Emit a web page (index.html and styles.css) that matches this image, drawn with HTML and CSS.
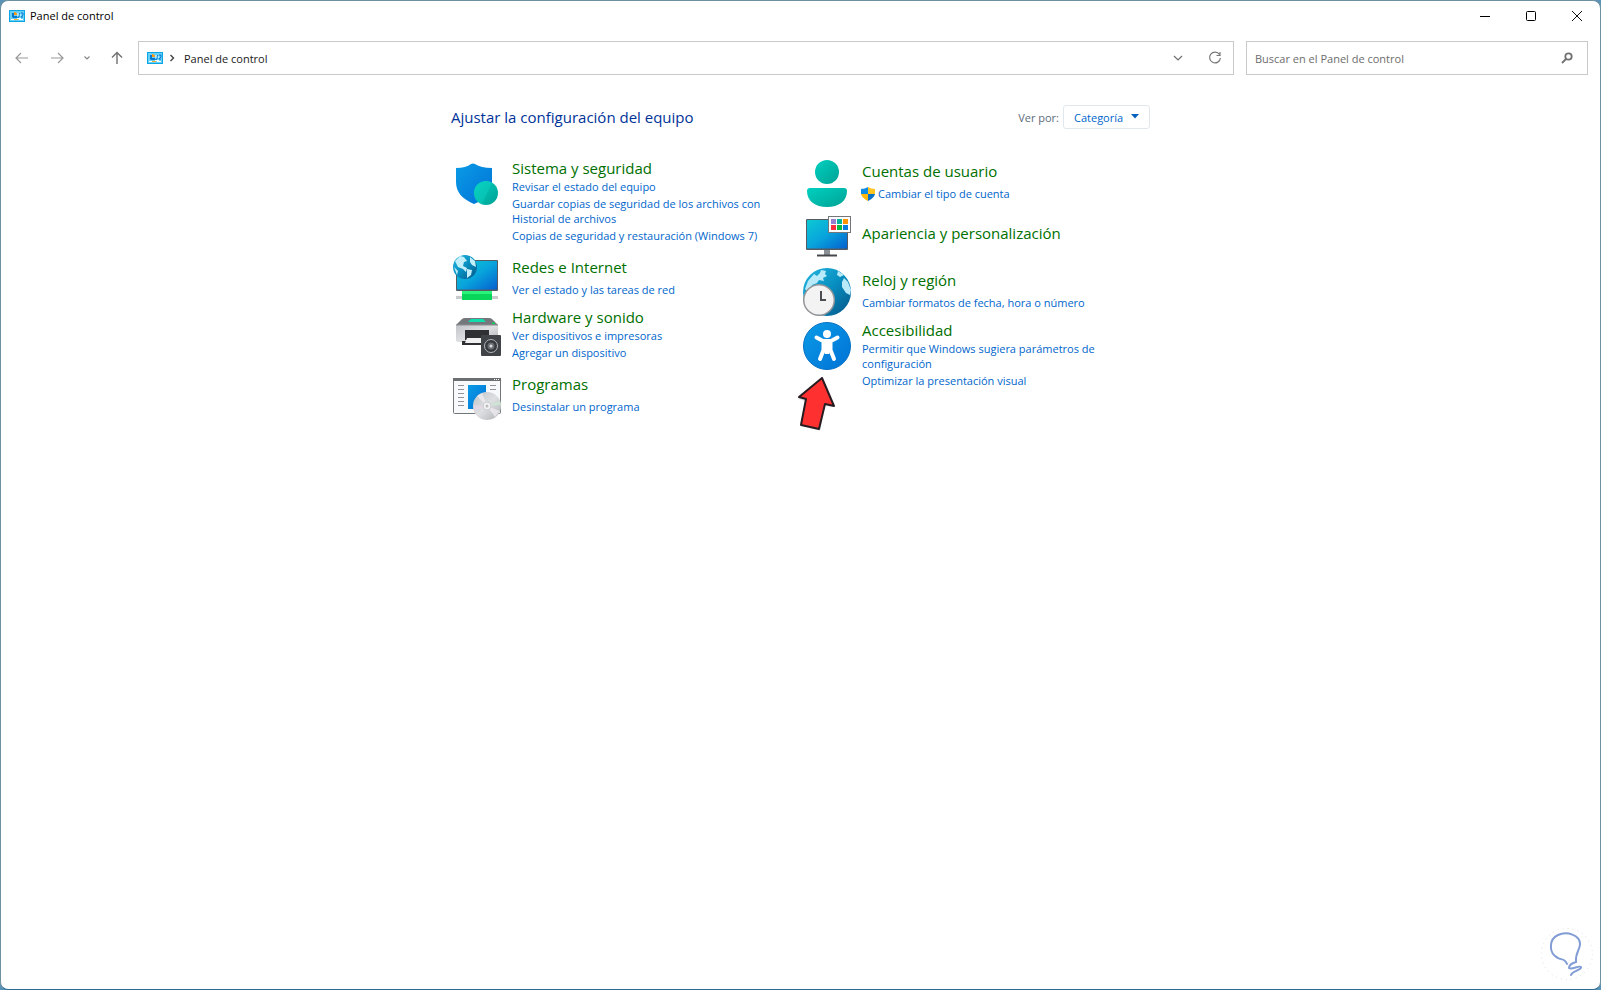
FILE: index.html
```html
<!DOCTYPE html>
<html lang="es">
<head>
<meta charset="utf-8">
<title>Panel de control</title>
<link rel="stylesheet" href="styles.css">
</head>
<body>
<svg class="defs" aria-hidden="true">
  <defs>
    <linearGradient id="blue" x1="0" y1="0" x2="1" y2="1"><stop offset="0" stop-color="#0a9be6"/><stop offset="1" stop-color="#0072d6"/></linearGradient>
    <linearGradient id="screen" x1="0" y1="0" x2="1" y2="1"><stop offset="0" stop-color="#0cc8d2"/><stop offset=".5" stop-color="#08a4dc"/><stop offset="1" stop-color="#0560cf"/></linearGradient>
    <linearGradient id="teal" x1="0" y1="0" x2="1" y2="1"><stop offset="0" stop-color="#00d0c0"/><stop offset="1" stop-color="#00a294"/></linearGradient>
    <linearGradient id="sea" x1="0" y1="0" x2="1" y2="1"><stop offset="0" stop-color="#25b8e0"/><stop offset=".5" stop-color="#078ec0"/><stop offset="1" stop-color="#075385"/></linearGradient>
    <linearGradient id="silver" x1="0" y1="0" x2="1" y2="1"><stop offset="0" stop-color="#c2c5c9"/><stop offset=".5" stop-color="#dddfe1"/><stop offset="1" stop-color="#aeb1b5"/></linearGradient>
    <symbol id="panel" viewBox="0 0 16 12">
      <rect width="16" height="12" fill="#0aa5e4"/><rect x="1" y="1" width="14" height="10" fill="#67d0f7"/>
      <path d="M3 3h2v3h3v2H4L3 7z" fill="#0878cf"/><path d="M5 2v3h3a3 3 0 0 0-3-3z" fill="#ff980e"/>
      <path d="M8 8l2-1V4l1-1M12 3h2v2l-2 2h2" fill="none" stroke="#0878cf"/><path d="M9 3v3M11 5h1M8 8.500h4" fill="none" stroke="#fff"/>
      <path d="M2 9.500h4M10 9.500h4" stroke="#fff"/><path d="M5 9.500h4" stroke="#ffad2c"/>
    </symbol>
  </defs>
</svg>
<div class="window">
  <header class="titlebar">
    <svg class="app-icon" aria-hidden="true"><use href="#panel"/></svg>
    <h1 class="window-title">Panel de control</h1>
    <div class="window-controls">
      <button type="button" aria-label="Minimizar"><svg width="12" height="12" viewBox="0 0 12 12"><path d="M1 6.500h10" stroke="#000"/></svg></button>
      <button type="button" aria-label="Maximizar"><svg width="12" height="12" viewBox="0 0 12 12"><rect x="1.500" y="1.500" width="9" height="9" rx="1" fill="none" stroke="#000"/></svg></button>
      <button type="button" aria-label="Cerrar"><svg width="12" height="12" viewBox="0 0 12 12"><path d="M1 1l10 10M11 1L1 11" stroke="#111"/></svg></button>
    </div>
  </header>

  <nav class="toolbar" aria-label="Navegación">
    <div class="history">
      <button type="button" class="nav-wide" aria-label="Atrás"><svg width="14" height="12" viewBox="0 0 14 12"><path d="M13 6H1.500M6 1L1 6l5 5" fill="none" stroke="#999" stroke-width="1.200"/></svg></button>
      <button type="button" class="nav-wide" aria-label="Adelante"><svg width="14" height="12" viewBox="0 0 14 12"><path d="M1 6h11.500M8 1l5 5-5 5" fill="none" stroke="#999" stroke-width="1.200"/></svg></button>
      <button type="button" class="nav-narrow" aria-label="Ubicaciones recientes"><svg width="8" height="8" viewBox="0 0 8 8"><path d="M1.500 2.500L4 5l2.500-2.500" fill="none" stroke="#888" stroke-width="1.200"/></svg></button>
      <button type="button" class="nav-wide" aria-label="Arriba"><svg width="12" height="14" viewBox="0 0 12 14"><path d="M6 13V2M1 6.500l5-5 5 5" fill="none" stroke="#707070" stroke-width="1.400"/></svg></button>
    </div>
    <div class="address">
      <svg class="app-icon" aria-hidden="true"><use href="#panel"/></svg>
      <svg class="crumb-arrow" width="6" height="8" viewBox="0 0 6 8" aria-hidden="true"><path d="M1.500 1l3 3-3 3" fill="none" stroke="#444" stroke-width="1.400"/></svg>
      <a class="crumb" href="#">Panel de control</a>
      <button type="button" class="address-button" aria-label="Ubicaciones anteriores"><svg width="10" height="8" viewBox="0 0 10 8"><path d="M1 2l4 4 4-4" fill="none" stroke="#707070" stroke-width="1.200"/></svg></button>
      <button type="button" class="address-button" aria-label="Actualizar"><svg width="14" height="14" viewBox="0 0 14 14"><path d="M11.500 3.500A5.400 5.400 0 1 0 12.400 7M12 1v3.500H8.500" fill="none" stroke="#777" stroke-width="1.200"/></svg></button>
    </div>
    <form class="search" role="search">
      <input type="search" aria-label="Buscar" placeholder="Buscar en el Panel de control">
      <button type="button" aria-label="Buscar"><svg width="12" height="12" viewBox="0 0 12 12"><circle cx="7.500" cy="4.500" r="3.200" fill="none" stroke="#707070" stroke-width="1.800"/><path d="M5 7L1 11" stroke="#707070" stroke-width="1.800"/></svg></button>
    </form>
  </nav>

  <main class="content">
    <div class="heading">
      <h2>Ajustar la configuración del equipo</h2>
      <div class="view-by">
        <label for="view">Ver por:</label>
        <div class="select">
          <select id="view"><option>Categoría</option></select>
          <svg width="8" height="5" viewBox="0 0 8 5" aria-hidden="true"><path d="M0 0h8L4 4.500z" fill="#0560c0"/></svg>
        </div>
      </div>
    </div>

    <div class="columns">
      <div class="column">
        <section class="category multi">
          <svg class="icon" viewBox="0 0 48 48" aria-hidden="true"><path d="M3 8q10 0 15-4 2-1 4 0 6 4 17 4v14c0 10-7 18-18 22C9 39 3 32 3 22z" fill="url(#blue)"/><circle cx="33" cy="33" r="12" fill="url(#teal)"/><path d="M21 33a12 12 0 0 1 18-10.400L29 44.300A12 12 0 0 1 21 33z" fill="#14dbcb" opacity=".35"/></svg>
          <div class="details">
            <h3><a href="#">Sistema y seguridad</a></h3>
            <ul><li><a href="#">Revisar el estado del equipo</a></li><li><a href="#">Guardar copias de seguridad de los archivos con Historial de archivos</a></li><li><a href="#">Copias de seguridad y restauración (Windows 7)</a></li></ul>
          </div>
        </section>
        <section class="category single">
          <svg class="icon" viewBox="0 0 48 48" aria-hidden="true"><rect x="3" y="5" width="42" height="31" rx="1" fill="#555b61"/><rect x="4" y="6" width="40" height="28.500" fill="url(#screen)"/><path d="M3 42.500h42" stroke="#c8cbce" stroke-width="3"/><rect x="9" y="36" width="30" height="9" fill="#08d65a"/><path d="M9 37.500h30" stroke="#2af37b" stroke-width="3"/><circle cx="12" cy="12" r="12" fill="url(#sea)"/><path d="M2 6l5-5 4 1 3 4-3 1-1 4 4 2-1 4-3-3-5-2-2-4zM17 2l5 4 1 6-4-2-2-3zM14 14l5 1-1 5-4 3zM1 12l4 4-1 4z" fill="#c2effa"/></svg>
          <div class="details">
            <h3><a href="#">Redes e Internet</a></h3>
            <ul><li><a href="#">Ver el estado y las tareas de red</a></li></ul>
          </div>
        </section>
        <section class="category multi">
          <svg class="icon" viewBox="0 0 48 48" aria-hidden="true"><path d="M3 16l6-6q1-1 3-1h24q2 0 3 1l6 6v2H3z" fill="#74787c"/><path d="M15 13l3-3h12l3 3z" fill="#10dcae"/><path d="M3 16h42v15q0 2-3 2H6q-3 0-3-2z" fill="url(#silver)"/><path d="M3 16h42" stroke="#8d9093"/><rect x="39" y="13.500" width="3" height="1.500" fill="#08d65a"/><path d="M12 21h24v10H12z" fill="#2f3032"/><path d="M9 32h30v4H9z" fill="#2e3034"/><path d="M14 29h20l2 5H12z" fill="#f0f0f1"/><rect x="28" y="26" width="20" height="21" rx="1" fill="#404448"/><circle cx="38" cy="37" r="6.500" fill="#36393d" stroke="#b4b8bc"/><circle cx="38" cy="37" r="3.500" fill="#6a6e72"/><circle cx="38" cy="37" r="1.500" fill="#ddd"/></svg>
          <div class="details">
            <h3><a href="#">Hardware y sonido</a></h3>
            <ul><li><a href="#">Ver dispositivos e impresoras</a></li><li><a href="#">Agregar un dispositivo</a></li></ul>
          </div>
        </section>
        <section class="category single">
          <svg class="icon" viewBox="0 0 48 48" aria-hidden="true"><rect x=".5" y="6.500" width="47" height="35" rx="1" fill="#f8f9fa" stroke="#74777a"/><path d="M0 7.500h48" stroke="#6c6f72" stroke-width="3"/><path d="M41 7.500h1m1 0h1m1 0h1" stroke="#fff"/><path d="M5 13.500h6m-6 4h6m-6 4h6m-6 4h6m-6 4h6m-6 4h6M37 13.500h6m-6 4h6" stroke="#909397"/><rect x="15" y="13" width="18" height="24" fill="url(#blue)"/><circle cx="34" cy="34" r="14" fill="url(#silver)"/><path d="M34 34L24 24l5-3zM34 34l13 5-5 6z" fill="#f3eff5" opacity=".7"/><path d="M34 34l-13 5-1-6z" fill="#efd7ee" opacity=".5"/><path d="M34 34l13-5 1 4z" fill="#ccefd4" opacity=".6"/><circle cx="34" cy="34" r="4" fill="#f2f2f3" stroke="#cacccf"/><circle cx="34" cy="34" r="1.500" fill="#bbb"/></svg>
          <div class="details">
            <h3><a href="#">Programas</a></h3>
            <ul><li><a href="#">Desinstalar un programa</a></li></ul>
          </div>
        </section>
      </div>

      <div class="column">
        <section class="category single">
          <svg class="icon" viewBox="0 0 48 48" aria-hidden="true"><circle cx="24" cy="13" r="12" fill="url(#teal)"/><path d="M7 29h34q3 0 3 3c0 10-8 16-20 16S4 42 4 32q0-3 3-3z" fill="url(#teal)"/></svg>
          <div class="details">
            <h3><a href="#">Cuentas de usuario</a></h3>
            <ul><li class="with-shield"><svg class="shield" width="14" height="14" viewBox="0 0 14 14" aria-hidden="true"><path d="M0 2q4 0 7-2v7H0z" fill="#0c8ce4"/><path d="M7 0q3 2 7 2v5H7z" fill="#ffc420"/><path d="M0 7h7v7Q1 11 0 7z" fill="#ffb80e"/><path d="M7 7h7q-1 4-7 7z" fill="#0770c8"/></svg><a href="#">Cambiar el tipo de cuenta</a></li></ul>
          </div>
        </section>
        <section class="category title-only">
          <svg class="icon" viewBox="0 0 48 48" aria-hidden="true"><rect x="3" y="8" width="42" height="31" rx="1" fill="#555b61"/><rect x="4" y="9" width="40" height="28.500" fill="url(#screen)"/><path d="M21 39h6v5h-6z" fill="#8b9095"/><path d="M14 44.500h20" stroke="#44484c" stroke-width="2"/><rect x="25.500" y="5.500" width="22" height="16" fill="#fff" stroke="#74777a"/><path d="M28 8h5v5h-5z" fill="#9880d0"/><path d="M34 8h5v5h-5z" fill="#00b4a0"/><path d="M40 8h5v5h-5z" fill="#ff9400"/><path d="M28 14h5v5h-5z" fill="#ff303b"/><path d="M34 14h5v5h-5z" fill="#08b944"/><path d="M40 14h5v5h-5z" fill="#087fe0"/></svg>
          <div class="details"><h3><a href="#">Apariencia y personalización</a></h3></div>
        </section>
        <section class="category single">
          <svg class="icon" viewBox="0 0 48 48" aria-hidden="true"><circle cx="24" cy="24" r="24" fill="url(#sea)"/><path d="M5 13l6-7 3 2 3-3 1-3 5 1-1 3 2 2-4 2 1 3-5-1-2 3-5 2-1 4-4 2-2-2z" fill="#b9eafa"/><path d="M41 10l4 4 3 8-1 5-4-2-4-6v-5zM35 3l6 4-4 2-3-2z" fill="#b9eafa"/><circle cx="16" cy="32" r="15.300" fill="#f3f3f4" stroke="#929598" stroke-width="1.500"/><path d="M18 23v9h5" fill="none" stroke="#4a4e52" stroke-width="2"/></svg>
          <div class="details">
            <h3><a href="#">Reloj y región</a></h3>
            <ul><li><a href="#">Cambiar formatos de fecha, hora o número</a></li></ul>
          </div>
        </section>
        <section class="category multi">
          <svg class="icon" viewBox="0 0 48 48" aria-hidden="true"><circle cx="24" cy="24" r="23.500" fill="url(#blue)" stroke="#0872c4"/><circle cx="24" cy="12" r="4" fill="#fff"/><path d="M13.500 15.500L20 19h8l6.500-3.500M20.500 20v8L17 37M27.500 20v8L31 37" fill="none" stroke="#fff" stroke-width="4" stroke-linecap="round" stroke-linejoin="round"/><path d="M20 18h8v10l-2 4h-4l-2-4z" fill="#fff"/></svg>
          <div class="details">
            <h3><a href="#">Accesibilidad</a></h3>
            <ul><li><a href="#">Permitir que Windows sugiera parámetros de configuración</a></li><li><a href="#">Optimizar la presentación visual</a></li></ul>
          </div>
          <svg class="pointer" width="40" height="56" viewBox="0 0 40 56" aria-hidden="true"><path d="M24 3L1 23l7 2L3 49l20 6 5-25 9 1z" fill="#bbb" opacity=".45"/><path d="M25 2L2 21l7 2-5 26 18 4 6-25 9 2z" fill="#ff3030" stroke="#281c20" stroke-width="2" stroke-linejoin="round"/></svg>
        </section>
      </div>
    </div>
  </main>

  <svg class="watermark" width="52" height="52" viewBox="0 0 52 52" aria-hidden="true"><circle cx="26" cy="26" r="25.500" fill="none" stroke="#dde0e6" stroke-dasharray="1 4"/><path d="M26 36c-2-6-6-4-9-6C7 25 8 11 17 7s22 0 22 9c0 6-5 9-4 18q-7 2-7 6c3 2 10-3 12-1 1 3-9 4-10 8" fill="none" stroke="#829cd5" stroke-width="2" stroke-linecap="round"/></svg>
</div>
</body>
</html>
```
FILE: styles.css
```css
* { box-sizing: border-box; }

body {
  margin: 0;
  background: #5a93b8;
  color: #1a1a1a;
  font: 11px/15px "Open Sans", "Noto Sans", sans-serif;
}

h1, h2, h3, ul { margin: 0; padding: 0; font-weight: 400; }
ul { list-style: none; }
a { color: #0066cc; text-decoration: none; }
a:hover { text-decoration: underline; }
svg { display: block; flex: none; }
.defs { position: absolute; width: 0; height: 0; }

button {
  display: flex;
  align-items: center;
  justify-content: center;
  flex: none;
  padding: 0;
  border: 0;
  background: none;
}

input, select { font: inherit; border: 0; background: none; }

.window {
  position: relative;
  min-height: 100vh;
  border: 1px solid #6f909f;
  border-bottom-color: #2c6a92;
  border-radius: 8px;
  background: #fff;
}

.titlebar {
  display: flex;
  align-items: center;
  height: 29px;
  padding-left: 8px;
}

.app-icon { width: 16px; height: 12px; }

.window-title {
  flex: 1;
  margin-left: 5px;
  color: #000;
  font-size: 11px;
}

.window-controls { display: flex; }
.window-controls button { width: 46px; height: 29px; }

.toolbar {
  display: flex;
  align-items: center;
  margin-top: 11px;
  padding-right: 12px;
}

.history { display: flex; width: 137px; padding-left: 3px; }
.history button { height: 32px; }
.history .nav-wide { width: 35px; }
.history .nav-narrow { width: 25px; }

.address, .search {
  display: flex;
  align-items: center;
  height: 34px;
  border: 1px solid #c9c9c9;
}

.address { flex: 1; margin-right: 12px; padding-left: 8px; }
.crumb-arrow { margin: 0 9px 0 6px; }
.crumb { flex: 1; color: #1a1a1a; }
.address-button { width: 37px; height: 32px; }
.search { width: 342px; }

.search input {
  flex: 1;
  min-width: 0;
  padding: 0 8px;
  color: #1a1a1a;
  outline: 0;
}

.search input::placeholder { color: #6d6d6d; opacity: 1; }
.search button { width: 40px; height: 32px; }

.content {
  max-width: 699px;
  margin: 0 auto;
  padding-top: 30px;
}

.heading {
  display: flex;
  align-items: center;
  justify-content: space-between;
}

.heading h2 { color: #003399; font-size: 15px; line-height: 20px; }
.view-by { display: flex; align-items: center; gap: 4px; color: #5c6b7c; }
.select { position: relative; }

.select select {
  display: block;
  width: 87px;
  height: 24px;
  padding: 0 20px 0 10px;
  border: 1px solid #e0e8ee;
  border-radius: 3px;
  color: #0066cc;
  appearance: none;
}

.select svg { position: absolute; right: 11px; top: 9px; pointer-events: none; }

.columns {
  display: grid;
  grid-template-columns: 350px 1fr;
  padding: 29px 0 0 2px;
}

.column { display: flex; flex-direction: column; gap: 4px; }
.column + .column { padding-top: 1px; }

.category {
  display: grid;
  grid-template-columns: 48px 260px;
  column-gap: 11px;
  align-items: start;
  position: relative;
}

.icon { width: 48px; height: 48px; }
.category h3 { font-size: 15px; line-height: 20px; }
.category h3 a { color: #007000; }
.category ul { display: grid; gap: 2px; padding-top: 1px; }

.multi .icon { margin-top: 2px; }
.multi .details { padding-bottom: 8px; }
.single .details { padding-top: 2px; }
.single ul { padding-top: 5px; }
.title-only { padding-bottom: 5px; }
.title-only .details { padding-top: 12px; }

.with-shield { display: flex; align-items: center; gap: 3px; margin-left: -1px; }

.pointer { position: absolute; left: -6px; top: 56px; }
.watermark { position: absolute; right: 7px; bottom: 9px; }
```
